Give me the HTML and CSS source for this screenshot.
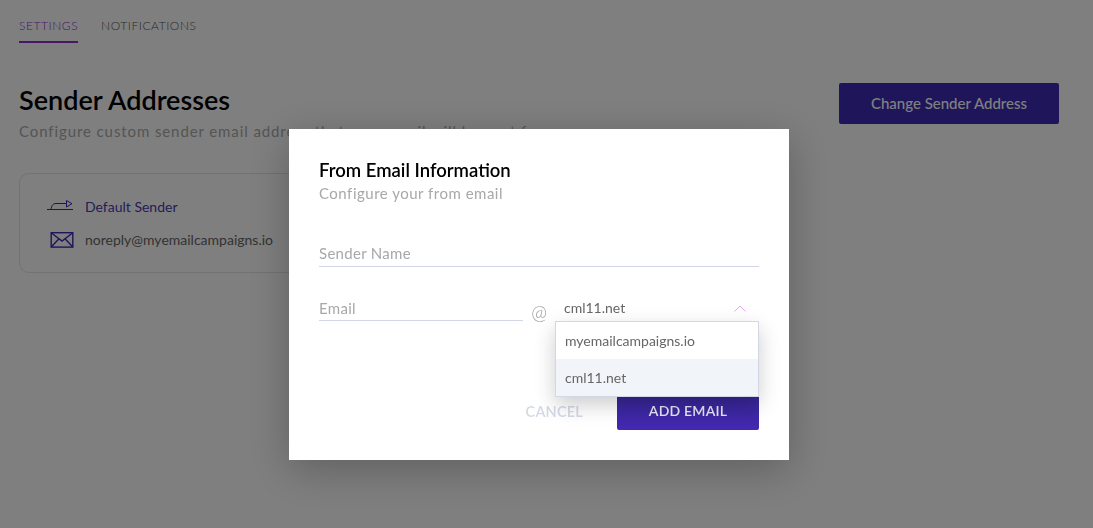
FILE: index.html
```html
<!DOCTYPE html>
<html lang="en">
<head>
    <meta charset="UTF-8">
    <meta name="viewport" content="width=device-width, initial-scale=1.0">
    <title>Sender Addresses</title>
    <link rel="stylesheet" href="styles.css">
</head>
<body>
    <div class="page">
        <div class="tabs">
            <a class="tab active">SETTINGS</a>
            <a class="tab">NOTIFICATIONS</a>
        </div>

        <div class="page-head">
            <div>
                <h1 class="page-title">Sender Addresses</h1>
                <p class="page-desc">Configure custom sender email address that your email will be sent from</p>
            </div>
            <button class="change-btn">Change Sender Address</button>
        </div>

        <div class="sender-card">
            <div class="sender-row default-row">
                <svg class="sender-icon" width="27" height="14" viewBox="0 0 27 14" fill="none" stroke="currentColor" stroke-width="1">
                    <path d="M0 9.5H26"></path>
                    <path d="M4 9.5C4.5 5.5 6 3.5 9 3.5H19.5"></path>
                    <path d="M19.5 0.5V7L25 3.7Z"></path>
                </svg>
                <span>Default Sender</span>
            </div>
            <div class="sender-row email-row">
                <svg class="sender-icon" width="24" height="16" viewBox="0 0 24 16" fill="none" stroke="currentColor" stroke-width="1.4">
                    <rect x="1.2" y="0.7" width="21.6" height="14.4"></rect>
                    <path d="M1.2 0.7L12 9L22.8 0.7"></path>
                    <path d="M1.2 15.1L9 6.8"></path>
                    <path d="M22.8 15.1L15 6.8"></path>
                </svg>
                <span>noreply@myemailcampaigns.io</span>
            </div>
        </div>
    </div>

    <div class="overlay">
        <div class="modal">
            <h2 class="modal-title">From Email Information</h2>
            <p class="modal-desc">Configure your from email</p>

            <div class="field name-field">Sender Name</div>

            <div class="email-line">
                <div class="field email-field">Email</div>
                <span class="at-sign">@</span>
                <div class="domain-select">
                    <div class="domain-value">
                        <span>cml11.net</span>
                        <svg width="12" height="7" viewBox="0 0 12 7" fill="none" stroke="currentColor" stroke-width="1">
                            <path d="M0.5 6.5L6 1L11.5 6.5"></path>
                        </svg>
                    </div>
                    <ul class="domain-menu">
                        <li class="domain-option">myemailcampaigns.io</li>
                        <li class="domain-option selected">cml11.net</li>
                    </ul>
                </div>
            </div>

            <div class="modal-actions">
                <button class="cancel-btn">CANCEL</button>
                <button class="add-btn">ADD EMAIL</button>
            </div>
        </div>
    </div>
</body>
</html>
```

FILE: styles.css
```css
:root {
    --primary-color: #3d2ab5;
    --border-color: #d3d6e6;
    --text-color: #666;
    --muted-color: #a8a8a8;
}

* {
    box-sizing: border-box;
}

html,
body {
    height: 100%;
}

body {
    margin: 0;
    background: #fff;
    font-family: "Lato", "Liberation Sans", sans-serif;
    overflow: hidden;
}

.page {
    padding: 0 34px 0 19px;
}

.tabs {
    display: flex;
    gap: 23px;
    height: 43px;
}

.tab {
    padding-top: 18px;
    font-size: 12px;
    line-height: 15px;
    letter-spacing: 0.55px;
    font-weight: 300;
    color: #555;
}

.tab.active {
    color: #9030c8;
    border-bottom: 2px solid #9030c8;
}

.page-head {
    display: flex;
    justify-content: space-between;
    align-items: flex-start;
    margin-top: 40px;
}

.page-title {
    margin: 0;
    font-size: 27px;
    line-height: 33px;
    font-weight: 600;
    color: #000;
}

.page-desc {
    margin: 6px 0 0;
    font-size: 15px;
    line-height: 18px;
    letter-spacing: 0.9px;
    color: #aaa;
}

.change-btn {
    width: 220px;
    height: 41px;
    padding-bottom: 2px;
    border: none;
    border-radius: 2px;
    background: var(--primary-color);
    color: #fff;
    font-family: inherit;
    font-size: 15px;
    font-weight: 500;
}

.sender-card {
    width: 400px;
    height: 100px;
    margin-top: 33px;
    padding: 23px 27px;
    border: 1px solid #e4e4e4;
    border-radius: 10px;
}

.sender-row {
    display: flex;
    align-items: center;
    font-size: 14px;
    line-height: 20px;
}

.default-row {
    gap: 11px;
    color: #4a3bb0;
}

.default-row .sender-icon {
    color: var(--primary-color);
}

.email-row {
    gap: 11px;
    margin-top: 13px;
    margin-left: 3px;
    color: var(--text-color);
}

.email-row .sender-icon {
    color: var(--primary-color);
}

.overlay {
    position: fixed;
    inset: 0;
    background: rgba(0, 0, 0, 0.5);
    display: flex;
    justify-content: center;
    align-items: flex-start;
    padding: 129px 15px 0 0;
}

.modal {
    width: 500px;
    height: 331px;
    padding: 30px;
    background: #fff;
    box-shadow: 0 10px 40px rgba(0, 0, 0, 0.25);
}

.modal-title {
    margin: 0;
    font-size: 18.5px;
    line-height: 23px;
    font-weight: 600;
    color: #000;
}

.modal-desc {
    margin: 2px 0 0;
    font-size: 15px;
    line-height: 19px;
    letter-spacing: 0.5px;
    color: var(--muted-color);
}

.field {
    border-bottom: 1px solid var(--border-color);
    font-size: 15px;
    line-height: 18px;
    letter-spacing: 0.3px;
    color: var(--muted-color);
}

.name-field {
    margin-top: 41px;
    padding-bottom: 4px;
}

.email-line {
    display: flex;
    margin-top: 32px;
}

.email-field {
    width: 204px;
    height: 22px;
}

.at-sign {
    width: 32px;
    padding-top: 3px;
    text-align: center;
    font-size: 19px;
    line-height: 20px;
    font-weight: 300;
    color: #999;
}

.domain-select {
    position: relative;
    width: 204px;
}

.domain-value {
    display: flex;
    justify-content: space-between;
    align-items: center;
    height: 22px;
    padding: 0 13px 4px 9px;
    font-size: 14px;
    line-height: 18px;
    color: var(--text-color);
}

.domain-value svg {
    color: #e8a8f5;
}

.domain-menu {
    position: absolute;
    top: 22px;
    left: 0;
    right: 0;
    z-index: 2;
    margin: 0;
    padding: 0;
    list-style: none;
    background: #fff;
    border: 1px solid var(--border-color);
    box-shadow: 0 8px 20px rgba(0, 0, 0, 0.2);
}

.domain-option {
    height: 37px;
    padding: 0 9px;
    font-size: 14px;
    line-height: 37px;
    color: var(--text-color);
}

.domain-option.selected {
    background: #f1f4f9;
}

.modal-actions {
    display: flex;
    justify-content: flex-end;
    align-items: center;
    gap: 34px;
    margin-top: 70px;
}

.cancel-btn {
    padding: 0;
    border: none;
    background: none;
    font-family: inherit;
    font-size: 14.5px;
    font-weight: 600;
    letter-spacing: 0.2px;
    color: #d5d9e6;
}

.add-btn {
    width: 142px;
    height: 38px;
    padding-bottom: 2px;
    border: none;
    border-radius: 2px;
    background: linear-gradient(#35258f, #4329b3);
    color: #e8e6f5;
    font-family: inherit;
    font-size: 14px;
    font-weight: 600;
    letter-spacing: 0.2px;
}
```
